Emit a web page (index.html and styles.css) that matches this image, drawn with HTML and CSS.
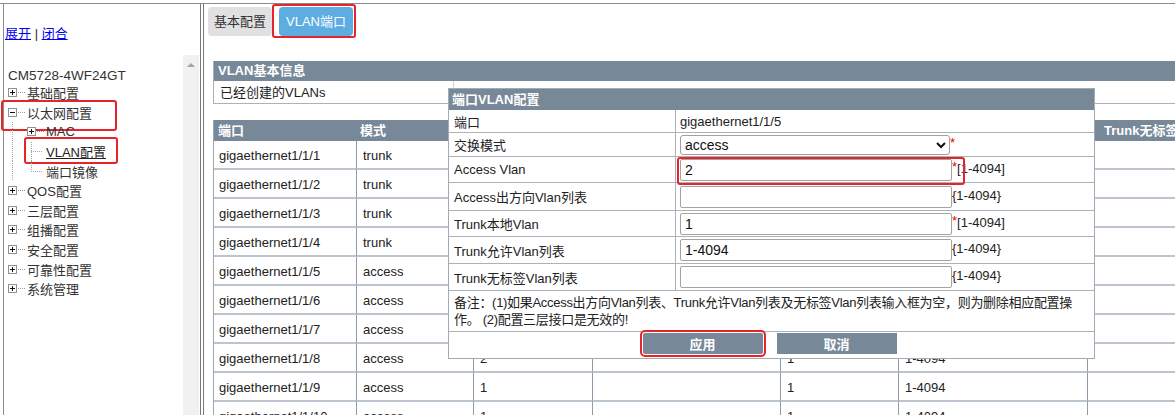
FILE: index.html
```html
<!DOCTYPE html>
<html>
  <head>
    <meta charset="utf-8">
    <title>VLAN端口</title>
    <link rel="stylesheet" href="styles.css">
  </head>
  <body>
    <div class="frames">
      <div class="leftframe">
        <div class="links"><a href="#">展开</a> | <a href="#">闭合</a></div>
        <div class="treebox">
          <div class="tree">
            <div class="root">CM5728-4WF24GT</div>
            <div class="node"><span class="pm plus"></span><span class="dash"></span><span>基础配置</span></div>
            <div class="node hl-eth"><span class="pm minus"></span><span class="dash"></span><span>以太网配置</span></div>
            <div class="node"><span class="vl"></span><span class="pm plus"></span><span class="dash"></span><span>MAC</span></div>
            <div class="node hl-vlan"><span class="vl"></span><span class="join"></span><a class="cur" href="#">VLAN配置</a></div>
            <div class="node"><span class="vl"></span><span class="join last"></span><span>端口镜像</span></div>
            <div class="node"><span class="pm plus"></span><span class="dash"></span><span>QOS配置</span></div>
            <div class="node"><span class="pm plus"></span><span class="dash"></span><span>三层配置</span></div>
            <div class="node"><span class="pm plus"></span><span class="dash"></span><span>组播配置</span></div>
            <div class="node"><span class="pm plus"></span><span class="dash"></span><span>安全配置</span></div>
            <div class="node"><span class="pm plus"></span><span class="dash"></span><span>可靠性配置</span></div>
            <div class="node"><span class="pm plus"></span><span class="dash"></span><span>系统管理</span></div>
          </div>
          <div class="scrollbar"><span class="up"></span></div>
        </div>
      </div>

      <div class="rightframe">
        <div class="tabs">
          <div class="tab">基本配置</div>
          <div class="tab on">VLAN端口</div>
        </div>

        <table class="info">
          <tr><th colspan="2">VLAN基本信息</th></tr>
          <tr><td class="k">已经创建的VLANs</td><td>1-2,14,100</td></tr>
        </table>

        <!-- columns 3-6 of the first rows sit under the dialog -->
        <table class="ports">
          <colgroup>
            <col style="width:142px"><col style="width:117px"><col style="width:119px"><col style="width:188px">
            <col style="width:118px"><col style="width:189px"><col style="width:200px">
          </colgroup>
          <tr><th>端口</th><th>模式</th><th></th><th></th><th></th><th></th><th class="last">Trunk无标签Vlan列表</th></tr>
          <tr><td>gigaethernet1/1/1</td><td>trunk</td><td></td><td></td><td></td><td></td><td></td></tr>
          <tr><td>gigaethernet1/1/2</td><td>trunk</td><td></td><td></td><td></td><td></td><td></td></tr>
          <tr><td>gigaethernet1/1/3</td><td>trunk</td><td></td><td></td><td></td><td></td><td></td></tr>
          <tr><td>gigaethernet1/1/4</td><td>trunk</td><td></td><td></td><td></td><td></td><td></td></tr>
          <tr><td>gigaethernet1/1/5</td><td>access</td><td></td><td></td><td></td><td></td><td></td></tr>
          <tr><td>gigaethernet1/1/6</td><td>access</td><td></td><td></td><td></td><td></td><td></td></tr>
          <tr><td>gigaethernet1/1/7</td><td>access</td><td></td><td></td><td></td><td></td><td></td></tr>
          <tr><td>gigaethernet1/1/8</td><td>access</td><td>2</td><td></td><td>1</td><td>1-4094</td><td></td></tr>
          <tr><td>gigaethernet1/1/9</td><td>access</td><td>1</td><td></td><td>1</td><td>1-4094</td><td></td></tr>
          <tr><td>gigaethernet1/1/10</td><td>access</td><td>1</td><td></td><td>1</td><td>1-4094</td><td></td></tr>
        </table>

        <div class="dlg">
          <table>
            <tr><th colspan="2">端口VLAN配置</th></tr>
            <tr class="h23"><td class="lbl">端口</td><td>gigaethernet1/1/5</td></tr>
            <tr class="h24"><td class="lbl">交换模式</td><td><select><option>access</option><option>trunk</option></select><span class="req">*</span></td></tr>
            <tr class="h26"><td class="lbl">Access Vlan</td><td><span class="mark"><input type="text" value="2"><span class="req">*</span></span>[1-4094]</td></tr>
            <tr class="h28"><td class="lbl">Access出方向Vlan列表</td><td><input type="text" value="">{1-4094}</td></tr>
            <tr class="h26"><td class="lbl">Trunk本地Vlan</td><td><input type="text" value="1"><span class="req">*</span>[1-4094]</td></tr>
            <tr class="h27"><td class="lbl">Trunk允许Vlan列表</td><td><input type="text" value="1-4094">{1-4094}</td></tr>
            <tr class="h27"><td class="lbl">Trunk无标签Vlan列表</td><td><input type="text" value="">{1-4094}</td></tr>
            <tr class="h40"><td class="note" colspan="2"><span class="line">备注：(1)如果Access出方向Vlan列表、Trunk允许Vlan列表及无标签Vlan列表输入框为空，则为删除相应配置操</span><span class="line">作。 (2)配置三层接口是无效的!</span></td></tr>
            <tr class="h26"><td class="btnrow" colspan="2"><div class="btns"><button class="btn apply">应用</button><button class="btn">取消</button></div></td></tr>
          </table>
        </div>
      </div>
    </div>
  </body>
</html>
```

FILE: styles.css
```css
* {
box-sizing: border-box;
}
html, body {
margin: 0;
height: 100%;
overflow: hidden;
background: #fff;
}
body {
font-family: "Liberation Sans", "Noto Sans CJK SC", sans-serif;
font-size: 13px;
color: #222;
}
.frames {
display: flex;
margin-top: 3px;
height: 412px;
border-top: 1px solid #8c8c8c;
}

/* left frame: menu tree */
.leftframe {
width: 198px;
margin-left: 3px;
border-left: 1px solid #8c8c8c;
border-right: 1px solid #7a7a7a;
display: flex;
flex-direction: column;
}
.links {
margin-top: 22px;
padding-left: 1px;
line-height: 16px;
color: #333;
}
.links a {
color: #0000ee;
}
.treebox {
flex: 1;
display: flex;
margin-top: 13px;
}
.tree {
flex: 1;
padding: 14px 0 0 4px;
color: #333;
}
.root {
height: 14px;
line-height: 14px;
font-size: 13.5px;
}
.node {
display: flex;
align-items: center;
height: 19.6px;
white-space: nowrap;
position: relative;
}
.pm {
width: 9px;
height: 9px;
border: 1px solid #919191;
background: linear-gradient(#111, #111) center / 5px 1px no-repeat, #fff;
}
.pm.plus {
background: linear-gradient(#111, #111) center / 5px 1px no-repeat, linear-gradient(#111, #111) center / 1px 5px no-repeat, #fff;
}
.dash {
width: 7px;
margin: 0 2px 0 1px;
border-top: 1px dotted #999;
}
.vl {
width: 19px;
align-self: stretch;
background: repeating-linear-gradient(to bottom, #a5a5a5 0 1px, transparent 1px 2px) 4px 0 / 1px 100% no-repeat;
}
.join {
width: 17px;
margin-right: 2px;
align-self: stretch;
background: repeating-linear-gradient(to bottom, #a5a5a5 0 1px, transparent 1px 2px) 4px 0 / 1px 100% no-repeat,
repeating-linear-gradient(to right, #a5a5a5 0 1px, transparent 1px 2px) 4px 50% / 12px 1px no-repeat;
}
.join.last {
background: repeating-linear-gradient(to bottom, #a5a5a5 0 1px, transparent 1px 2px) 4px 0 / 1px 50% no-repeat,
repeating-linear-gradient(to right, #a5a5a5 0 1px, transparent 1px 2px) 4px 50% / 12px 1px no-repeat;
}
a.cur {
color: #222;
}
.hl-eth::after, .hl-vlan::after {
content: "";
position: absolute;
border: 2px solid #e8232a;
border-radius: 3px;
}
.hl-eth::after {
left: -7px;
top: -3px;
width: 112px;
height: 27px;
}
.hl-vlan::after {
left: 16px;
top: -5px;
width: 90px;
height: 23px;
}
.scrollbar {
width: 16px;
margin-right: 1px;
padding-top: 8px;
background: #f1f1f1;
}
.scrollbar .up {
display: block;
width: 0;
height: 0;
margin: 0 auto;
border-left: 4px solid transparent;
border-right: 4px solid transparent;
border-bottom: 4px solid #a3a3a3;
}

/* right frame */
.rightframe {
flex: 1;
margin-left: 2px;
border-left: 1px solid #7a7a7a;
position: relative;
overflow: hidden;
}
.tabs {
display: flex;
padding: 3px 0 0 4px;
}
.tab {
height: 29px;
line-height: 29px;
padding: 0 6px;
margin-right: 7px;
background: #e1e1e1;
border-radius: 4px;
color: #333;
}
.tab.on {
padding: 0 7px;
background: #5dade2;
color: #fff;
position: relative;
}
.tab.on::after {
content: "";
position: absolute;
left: -7px;
right: -3px;
top: -3px;
bottom: -2px;
border: 2px solid #e8232a;
border-radius: 3px;
}
th {
background: #778899;
color: #fff;
font-weight: bold;
text-align: left;
}
.info {
width: 1100px;
margin: 25px 0 0 9px;
border-spacing: 0;
border-left: 1px solid #aab3bd;
border-bottom: 1px solid #aab3bd;
}
.info th {
padding: 3px 4px;
line-height: 14px;
}
.info td {
padding: 5px 6px 3px;
line-height: 14px;
}
.info td.k {
width: 240px;
border-right: 1px solid #cfd5db;
}
.ports {
table-layout: fixed;
width: 1073px;
margin: 16px 0 0 9px;
border-spacing: 0;
border-left: 1px solid #9aa6b4;
}
.ports th {
height: 21px;
padding: 3px 4px;
line-height: 15px;
white-space: nowrap;
}
.ports th.last {
padding-left: 17px;
}
.ports td {
height: 29px;
padding: 7px 5px 5px;
line-height: 15px;
border-bottom: 2px solid #bcc4cd;
white-space: nowrap;
}
.ports td + td {
border-left: 1px solid #8e9bab;
padding-left: 6px;
}

/* port vlan dialog */
.dlg {
position: absolute;
left: 244px;
top: 84px;
width: 647px;
background: #fff;
border: 1px solid #a2aab3;
}
.dlg table {
width: 100%;
border-spacing: 0;
}
.dlg th {
padding: 3px 3px;
line-height: 15px;
}
.dlg td {
padding: 0 4px;
border-bottom: 1px solid #aab2bb;
white-space: nowrap;
vertical-align: middle;
}
.dlg td.lbl {
width: 227px;
padding-left: 5px;
border-right: 1px solid #aab2bb;
}
.h23 { height: 23px; }
.h24 { height: 24px; }
.h26 { height: 26px; }
.h27 { height: 27px; }
.h28 { height: 28px; }
.h40 { height: 40px; }
.dlg input {
width: 272px;
height: 22px;
padding: 0 4px;
border: 1px solid #a3a3a3;
border-radius: 2px;
font: 14px "Liberation Sans", "Noto Sans CJK SC", sans-serif;
color: #111;
vertical-align: middle;
}
.dlg select {
width: 270px;
height: 20px;
border: 1px solid #a0a0a0;
border-radius: 3px;
background: #fff;
font: 14px "Liberation Sans", "Noto Sans CJK SC", sans-serif;
color: #111;
vertical-align: middle;
}
.req {
color: #e00;
vertical-align: top;
}
.mark {
display: inline-block;
vertical-align: middle;
position: relative;
}
.mark::after {
content: "";
position: absolute;
left: -3px;
top: -2px;
width: 284px;
height: 24px;
border: 2px solid #e8232a;
border-radius: 3px;
}
.dlg td.note {
padding: 3px 5px;
line-height: 17px;
letter-spacing: -0.3px;
vertical-align: top;
}
.note .line {
display: block;
}
.dlg td.btnrow {
padding: 0 4px 0 0;
border-bottom: 0;
vertical-align: top;
}
.btns {
display: flex;
justify-content: center;
gap: 14px;
padding-top: 1px;
}
.btn {
width: 120px;
height: 21px;
padding: 0;
border: 0;
background: #778899;
color: #fff;
font: bold 13px "Liberation Sans", "Noto Sans CJK SC", sans-serif;
}
.btn.apply {
outline: 2px solid #e8232a;
outline-offset: 1px;
border-radius: 2px;
}
```
